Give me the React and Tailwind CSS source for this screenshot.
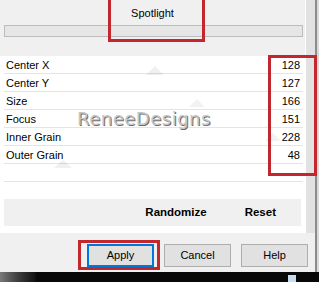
const rows = [
  { label: "Center X", value: 128 },
  { label: "Center Y", value: 127 },
  { label: "Size", value: 166 },
  { label: "Focus", value: 151 },
  { label: "Inner Grain", value: 228 },
  { label: "Outer Grain", value: 48 },
];

function Button({ children, focused }) {
  return (
    <button
      className={`flex h-[23px] w-[67px] items-center justify-center bg-[#e1e1e1] text-[11px] text-black ${
        focused ? "border-2 border-[#0078d7]" : "border border-[#adadad]"
      }`}
    >
      {children}
    </button>
  );
}

export default function App() {
  return (
    <div className="relative h-[282px] w-[319px] overflow-hidden bg-[#f0f0f0] font-['Liberation_Sans',Arial,sans-serif] text-black">
      <div className="flex h-[272px]">
        <div className="flex w-[315px] flex-col">
          <div className="flex h-[233px]">
            <div className="flex w-[305px] flex-col">
              {/* header */}
              <div className="flex h-[56px] flex-col pt-[7px]">
                <div className="h-[12px] text-center text-[11px] leading-[12px]">Spotlight</div>
                <div className="ml-[4px] mt-[6px] h-[12px] w-[299px] border border-[#bcbcbc] bg-[#e6e6e6]" />
              </div>

              {/* property list */}
              <div className="flex h-[177px] flex-col bg-white">
                <div className="ml-[4px] mr-[2px] flex flex-col">
                  {rows.map((r) => (
                    <div
                      key={r.label}
                      className="flex h-[18px] items-center justify-between border-b border-[#e4e4e4] pl-[2px] pr-[3px] text-[11px] leading-[12px]"
                    >
                      <span>{r.label}</span>
                      <span>{r.value}</span>
                    </div>
                  ))}
                  <div className="h-[18px] border-b border-[#e4e4e4]" />
                </div>
                <div className="mx-[4px] mt-[17px] flex h-[27px] items-center justify-end gap-[38px] bg-[#f0f0f0] pr-[25px] text-[11.5px] font-bold">
                  <span>Randomize</span>
                  <span>Reset</span>
                </div>
              </div>
            </div>
            <div className="w-[10px] border-l border-white bg-[#e2e2e2]" />
          </div>

          {/* footer buttons */}
          <div className="flex h-[39px] items-start justify-end gap-[10px] pr-[7px] pt-[11px]">
            <Button focused>Apply</Button>
            <Button>Cancel</Button>
            <Button>Help</Button>
          </div>
        </div>
        <div className="flex w-[4px]">
          <div className="w-[2px] bg-[#8c8c8c]" />
          <div className="w-[2px] bg-[#d9d9d9]" />
        </div>
      </div>

      {/* dark strip of the background below the dialog */}
      <div className="flex h-[10px] bg-[#080808]">
        <div className="h-full w-[36px] bg-gradient-to-r from-[#7a7a7a] via-[#3e3e3e] to-[#101010]" />
        <div className="flex-1" />
        <div className="mr-[23px] mt-[3px] h-[7px] w-[8px] bg-[#c8dcf0]" />
      </div>

      {/* watermark */}
      <svg className="pointer-events-none absolute left-0 top-0" width="319" height="282">
        <polygon points="146,75 155,66 164,75" fill="#000" fillOpacity="0.06" />
        <polygon points="189,107 197,99 205,107" fill="#000" fillOpacity="0.05" />
        <polygon points="265,141 273,133 281,141" fill="#000" fillOpacity="0.05" />
        <polygon points="54,168 63,160 72,168" fill="#000" fillOpacity="0.06" />
      </svg>
      <div className="pointer-events-none absolute left-[77px] top-[110px] font-['DejaVu_Sans',sans-serif] text-[18px] leading-[18px] tracking-[0.5px] text-[#c6c6c6] [text-shadow:1px_1px_0_#6e6e6e]">
        ReneeDesigns
      </div>

      {/* red annotation boxes */}
      <div className="pointer-events-none absolute left-[108px] top-0 h-[42px] w-[97px] border-[3px] border-t-0 border-[#c1272d]" />
      <div className="pointer-events-none absolute left-[268px] top-[55px] h-[121px] w-[49px] border-[3px] border-[#c1272d]" />
      <div className="pointer-events-none absolute left-[78px] top-[240px] h-[30px] w-[82px] border-[3px] border-[#c1272d]" />
    </div>
  );
}
